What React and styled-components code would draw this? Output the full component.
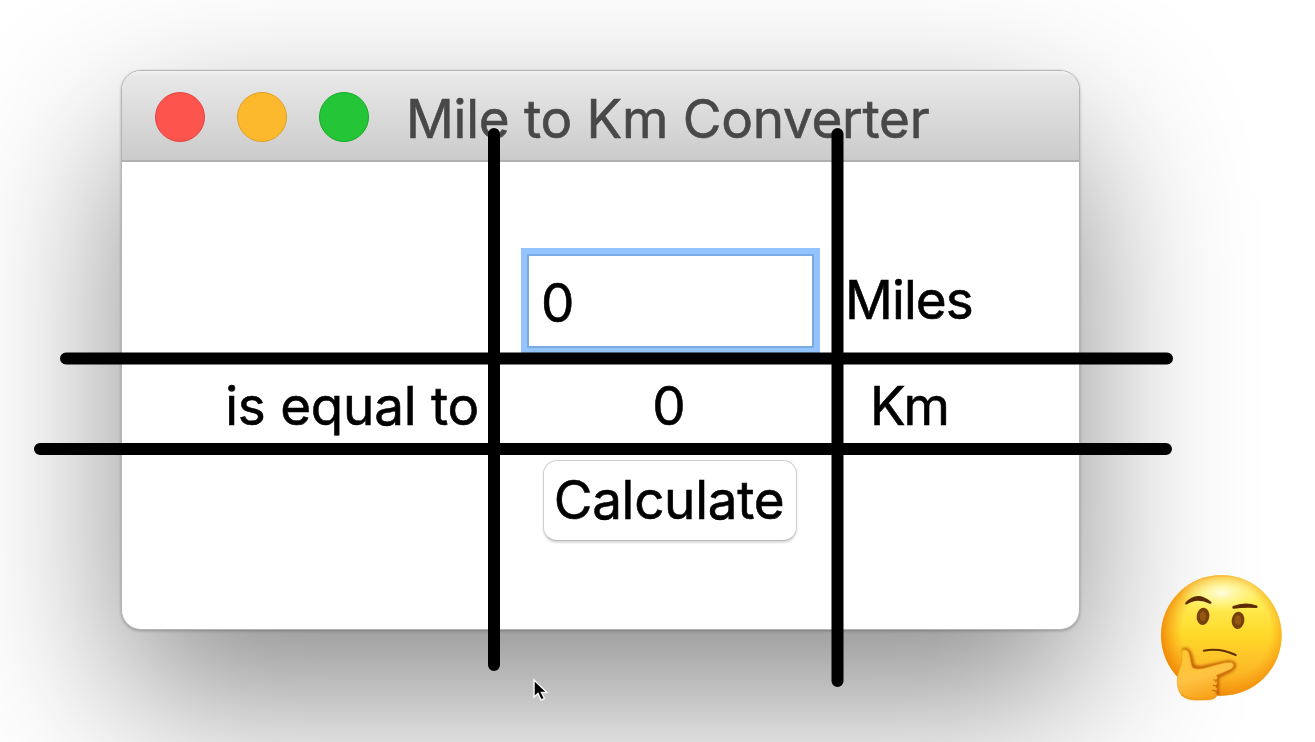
import React from 'react';
import styled, { createGlobalStyle } from 'styled-components';

const GlobalStyle = createGlobalStyle`
  * { box-sizing: border-box; }
  body { margin: 0; overflow: hidden; background: #fff; }
`;

const Stage = styled.main`
  position: relative;
  width: 1315px;
  height: 742px;
  padding: 70px 0 0 121px;
  overflow: hidden;
  background: #fff;
  font-family: Inter, "Liberation Sans", sans-serif;
  font-size: 53px;
  line-height: 64px;
  color: #000;
  -webkit-text-stroke: 0.6px currentColor;
`;

const Window = styled.section`
  display: flex;
  flex-direction: column;
  width: 959px;
  height: 560px;
  border: 1.5px solid #b4b4b4;
  border-radius: 20px;
  background: #fff;
  box-shadow: 0 1px 3px rgba(0, 0, 0, 0.25), 0 68px 165px rgba(0, 0, 0, 0.46);
`;

const TitleBar = styled.header`
  display: flex;
  align-items: center;
  height: 91px;
  padding-left: 33px;
  border-bottom: 2px solid #b0b0b0;
  border-radius: 19px 19px 0 0;
  background: linear-gradient(#f4f4f4 0, #e8e8e8 5px, #cbcbcb 100%);
`;

const Lights = styled.div`
  display: flex;
  gap: 32px;
  margin-top: 3px;
`;

const Light = styled.span`
  width: 50px;
  height: 50px;
  border: 1.5px solid ${(p) => p.$edge};
  border-radius: 50%;
  background: ${(p) => p.$fill};
`;

const Title = styled.h1`
  margin: 6px 0 0 37px;
  font: inherit;
  letter-spacing: ${(p) => p.$track}px;
  white-space: nowrap;
  color: #484848;
`;

const Grid = styled.div`
  flex: 1;
  display: grid;
  grid-template-columns: 372px 344px 1fr;
  grid-template-rows: 197px 90px 1fr;
`;

const Cell = styled.div`
  display: flex;
  justify-content: ${(p) => p.$justify || 'flex-start'};
  align-items: flex-start;
  padding: ${(p) => p.$pad || '0'};
`;

const Label = styled.span`
  letter-spacing: ${(p) => p.$track || 0}px;
  white-space: nowrap;
`;

const Entry = styled.input`
  width: 299px;
  height: 106px;
  padding: 4px 0 0 14px;
  border: 6px solid #93c4fd;
  outline: 2px solid #7ba9e2;
  outline-offset: -8px;
  border-radius: 0;
  background: #fff;
  font: inherit;
  color: #000;
`;

const Button = styled.button`
  display: flex;
  justify-content: center;
  width: 254px;
  height: 81px;
  padding: 7px 2px 0 0;
  border: 1.5px solid #d0d0d0;
  border-bottom-color: #b8b8b8;
  border-radius: 14px;
  background: #fff;
  box-shadow: 0 2px 2px rgba(0, 0, 0, 0.14);
  font: inherit;
  letter-spacing: -0.3px;
  color: #000;
`;

const Overlay = styled.svg`
  position: absolute;
  inset: 0;
  pointer-events: none;
`;

const Emoji = styled.svg`
  position: absolute;
  left: 1145px;
  top: 560px;
`;

function GuideLines() {
  return (
    <Overlay width="1315" height="742" stroke="#000" strokeWidth="12" strokeLinecap="round">
      <path d="M494 134V665M837.5 134V681M66 358.5H1167M40 449H1166" />
      <path d="M534 680V697L538 693.5L541 700L544.5 698.5L541.5 692.5H547Z" strokeWidth="1.5" stroke="#f4f4f4" fill="#000" />
    </Overlay>
  );
}

function ThinkingFace() {
  return (
    <Emoji width="160" height="160" viewBox="0 0 480 480" fill="none" strokeLinecap="round" strokeLinejoin="round">
      <defs>
        <linearGradient id="face" x1="0" y1="0" x2="0" y2="1">
          <stop offset="0" stopColor="#fff27a" />
          <stop offset=".22" stopColor="#ffed55" />
          <stop offset=".5" stopColor="#ffd829" />
          <stop offset=".75" stopColor="#fdbd28" />
          <stop offset="1" stopColor="#f9a51b" />
        </linearGradient>
        <radialGradient id="rim" cx=".54" cy=".47" r=".54">
          <stop offset=".68" stopColor="#f79a10" stopOpacity="0" />
          <stop offset="1" stopColor="#f18a08" stopOpacity=".95" />
        </radialGradient>
        <radialGradient id="shine" cx=".5" cy=".4" r=".5">
          <stop offset="0" stopColor="#fffde0" />
          <stop offset="1" stopColor="#fff58a" stopOpacity="0" />
        </radialGradient>
        <linearGradient id="hand" x1="0" y1="0" x2=".3" y2="1">
          <stop offset="0" stopColor="#ffc62c" />
          <stop offset=".6" stopColor="#ffc343" />
          <stop offset="1" stopColor="#f9a41c" />
        </linearGradient>
        <filter id="soft"><feGaussianBlur stdDeviation="4" /></filter>
        <clipPath id="disc"><circle cx="229" cy="226" r="181" /></clipPath>
      </defs>
      <circle cx="229" cy="226" r="181" fill="url(#face)" />
      <circle cx="229" cy="226" r="181" fill="url(#rim)" />
      <ellipse cx="230" cy="110" rx="125" ry="60" fill="url(#shine)" />
      <path d="M124 130Q156 94 196 128Q156 108 124 130Z" fill="#5c2a04" stroke="#5c2a04" strokeWidth="7" />
      <path d="M266 142Q298 128 334 140Q298 138 266 142Z" fill="#5c2a04" stroke="#5c2a04" strokeWidth="8" />
      <ellipse cx="174" cy="169" rx="19" ry="26" fill="#75400a" transform="rotate(7 174 169)" />
      <ellipse cx="279" cy="181" rx="19" ry="26" fill="#75400a" transform="rotate(7 279 181)" />
      <ellipse cx="174" cy="169" rx="10" ry="15" fill="#935711" />
      <ellipse cx="279" cy="181" rx="10" ry="15" fill="#935711" />
      <path d="M176 272Q224 262 272 285" stroke="#603006" strokeWidth="6" />
      <g clipPath="url(#disc)">
        <path d="M117 270Q136 264 142 318Q160 328 178 322L250 307Q280 312 258 329L216 350V410" stroke="#b95303" strokeWidth="12" opacity=".9" filter="url(#soft)" />
      </g>
      <path d="M119 269C108 267 110 284 111 296C111 316 99 331 98 349C95 369 98 388 107 402C119 419 144 421 167 420C192 420 212 419 215 407C217 397 212 394 214 390C218 384 216 379 212 377C218 371 218 363 213 360C219 355 218 349 213 346C231 339 246 333 258 327C269 321 268 308 255 307C240 306 211 316 181 324C165 328 151 329 143 323C137 316 137 291 131 277C128 271 124 269 119 269Z" fill="url(#hand)" stroke="#eb9515" strokeWidth="2" />
      <path d="M205 360Q216 359 213 366M205 376Q216 376 214 382M203 391Q214 391 214 399" stroke="#bd6009" strokeWidth="3.5" opacity=".8" />
      <path d="M111 405Q129 418 166 417Q198 418 211 406" stroke="#f29a14" strokeWidth="6" opacity=".7" />
    </Emoji>
  );
}

export default function App() {
  return (
    <>
      <GlobalStyle />
      <Stage>
        <Window>
          <TitleBar>
            <Lights>
              <Light $fill="#fe544e" $edge="#e2443f" />
              <Light $fill="#fdb92d" $edge="#dfa023" />
              <Light $fill="#24c637" $edge="#17a92a" />
            </Lights>
            <Title $track={-0.28}>Mile to Km Converter</Title>
          </TitleBar>
          <Grid>
            <Cell />
            <Cell $pad="86px 0 0 27px">
              <Entry defaultValue="0" aria-label="Miles" />
            </Cell>
            <Cell $pad="106px 0 0 7px"><Label $track={-0.9}>Miles</Label></Cell>
            <Cell $justify="flex-end" $pad="15px 15px 0 0"><Label $track={-0.25}>is equal to</Label></Cell>
            <Cell $justify="center" $pad="15px 0 0 6px"><Label>0</Label></Cell>
            <Cell $pad="15px 0 0 32px"><Label $track={-2}>Km</Label></Cell>
            <Cell />
            <Cell $pad="11px 0 0 49px"><Button>Calculate</Button></Cell>
            <Cell />
          </Grid>
        </Window>
        <GuideLines />
        <ThinkingFace />
      </Stage>
    </>
  );
}
